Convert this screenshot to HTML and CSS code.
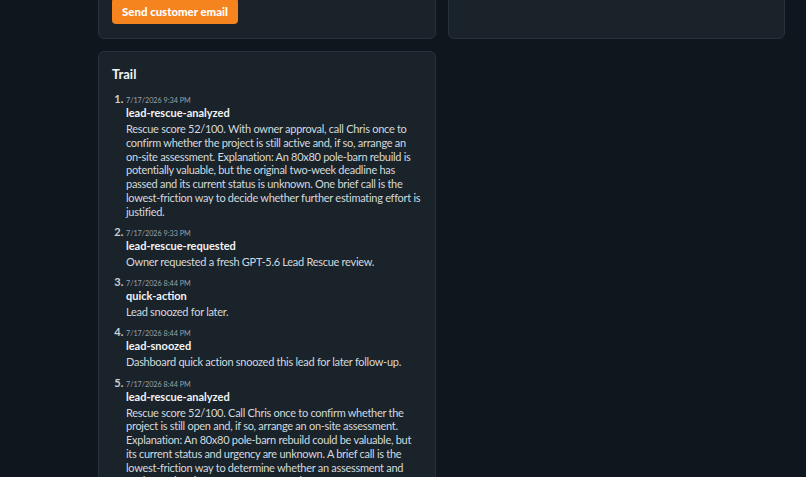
FILE: index.html
```html
<!DOCTYPE html>
<html>
<head>
<meta charset="utf-8">
<link rel="stylesheet" href="styles.css">
</head>
<body>
<div class="page">
  <div class="grid">
    <section class="card top-card">
      <button class="btn">Send customer email</button>
    </section>
    <section class="card top-card"></section>
    <section class="card trail">
      <h2 class="title">Trail</h2>
      <ol class="list">
        <li>
          <div class="date">7/17/2026 9:34 PM</div>
          <div class="kind">lead-rescue-analyzed</div>
          <p class="body">Rescue score 52/100. With owner approval, call Chris once to confirm whether the project is still active and, if so, arrange an on-site assessment. Explanation: An 80x80 pole-barn rebuild is potentially valuable, but the original two-week deadline has passed and its current status is unknown. One brief call is the lowest-friction way to decide whether further estimating effort is justified.</p>
        </li>
        <li>
          <div class="date">7/17/2026 9:33 PM</div>
          <div class="kind">lead-rescue-requested</div>
          <p class="body">Owner requested a fresh GPT-5.6 Lead Rescue review.</p>
        </li>
        <li>
          <div class="date">7/17/2026 8:44 PM</div>
          <div class="kind">quick-action</div>
          <p class="body">Lead snoozed for later.</p>
        </li>
        <li>
          <div class="date">7/17/2026 8:44 PM</div>
          <div class="kind">lead-snoozed</div>
          <p class="body">Dashboard quick action snoozed this lead for later follow-up.</p>
        </li>
        <li>
          <div class="date">7/17/2026 8:44 PM</div>
          <div class="kind">lead-rescue-analyzed</div>
          <p class="body">Rescue score 52/100. Call Chris once to confirm whether the project is still open and, if so, arrange an on-site assessment. Explanation: An 80x80 pole-barn rebuild could be valuable, but its current status and urgency are unknown. A brief call is the lowest-friction way to determine whether an assessment and further estimating effort are warranted.</p>
        </li>
      </ol>
    </section>
  </div>
</div>
</body>
</html>
```
FILE: styles.css
```css
html, body {
  margin: 0;
  padding: 0;
  background: #10161d;
  height: 100%;
  overflow: hidden;
}
body {
  font-family: "Segoe UI", "Lato", "Noto Sans", sans-serif;
  color: #d3d9de;
}
.page {
  padding: 0 21px 0 98px;
  margin-top: -17px;
}
.grid {
  display: grid;
  grid-template-columns: 338px 337px;
  column-gap: 12px;
  row-gap: 12px;
  align-items: start;
}
.card {
  background: #1a232a;
  border: 1px solid #28323a;
  border-radius: 6px;
  box-sizing: border-box;
}
.top-card {
  height: 56px;
  padding: 14px 13px;
}
.btn {
  display: block;
  height: 26px;
  width: 126px;
  padding: 0;
  border: none;
  border-radius: 4px;
  background: #f5841f;
  color: #ffffff;
  font-family: inherit;
  font-weight: 900;
  font-size: 11.4px;
}
.trail {
  padding: 13px 13px 20px;
  height: 500px;
}
.title {
  margin: 0;
  font-size: 13px;
  line-height: 18px;
  font-weight: 700;
  color: #f1f4f6;
}
.list {
  margin: 9px 0 0;
  padding-left: 14px;
  font-size: 11px;
  color: #c9d0d6;
}
.list li {
  margin-bottom: 6.5px;
}
.list li::marker {
  font-weight: 700;
}
.date {
  font-size: 7.2px;
  line-height: 11px;
  color: #98a2ab;
}
.kind {
  font-size: 11px;
  line-height: 14px;
  font-weight: 700;
  color: #f1f4f6;
}
.body {
  margin: 2px 0 0;
  font-size: 11px;
  line-height: 13.75px;
  letter-spacing: -0.28px;
  color: #d3d9de;
}
```
